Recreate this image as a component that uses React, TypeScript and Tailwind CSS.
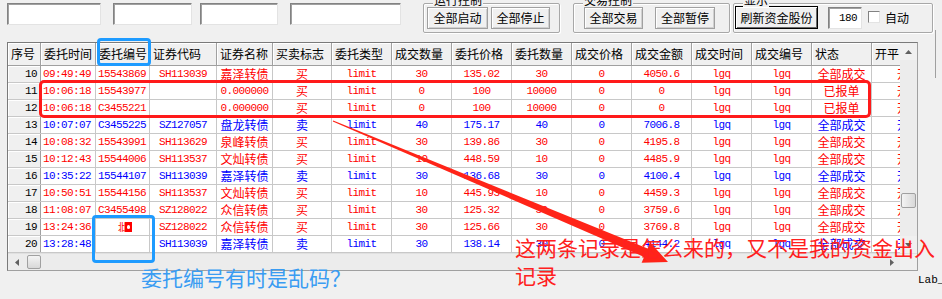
import type { ReactNode } from "react";

const cjk = "font-['Noto_Sans_CJK_SC',sans-serif]";
const mono = "font-['Liberation_Mono','Noto_Sans_CJK_SC',monospace] text-[11px] tracking-[-0.6px]";

type Order = {
  n: number;
  side: "买" | "卖";
  time: string;
  id: ReactNode;
  code: string;
  name: string;
  qty: string;
  price: string;
  oqty: string;
  amt: string;
  status: string;
};

const garbled = (
  <span className="ml-[20px] flex items-center">
    <span className={`${cjk} text-[10px] leading-none`}>邶</span>
    <span className="ml-[-2px] flex h-[10px] w-[7px] items-center justify-center bg-[#ff0000]">
      <span className="h-[4px] w-[3px] rounded-full bg-white" />
    </span>
  </span>
);

const orders: Order[] = [
  { n: 10, side: "买", time: "09:49:49", id: "15543869", code: "SH113039", name: "嘉泽转债", qty: "30", price: "135.02", oqty: "30", amt: "4050.6", status: "全部成交" },
  { n: 11, side: "买", time: "10:06:18", id: "15543977", code: "", name: "0.000000", qty: "0", price: "100", oqty: "10000", amt: "0", status: "已报单" },
  { n: 12, side: "买", time: "10:06:18", id: "C3455221", code: "", name: "0.000000", qty: "0", price: "100", oqty: "10000", amt: "0", status: "已报单" },
  { n: 13, side: "卖", time: "10:07:07", id: "C3455225", code: "SZ127057", name: "盘龙转债", qty: "40", price: "175.17", oqty: "40", amt: "7006.8", status: "全部成交" },
  { n: 14, side: "买", time: "10:08:32", id: "15543991", code: "SH113629", name: "泉峰转债", qty: "30", price: "139.86", oqty: "30", amt: "4195.8", status: "全部成交" },
  { n: 15, side: "买", time: "10:12:43", id: "15544006", code: "SH113537", name: "文灿转债", qty: "10", price: "448.59", oqty: "10", amt: "4485.9", status: "全部成交" },
  { n: 16, side: "卖", time: "10:35:22", id: "15544107", code: "SH113039", name: "嘉泽转债", qty: "30", price: "136.68", oqty: "30", amt: "4100.4", status: "全部成交" },
  { n: 17, side: "买", time: "10:50:51", id: "15544156", code: "SH113537", name: "文灿转债", qty: "10", price: "445.93", oqty: "10", amt: "4459.3", status: "全部成交" },
  { n: 18, side: "买", time: "11:08:07", id: "C3455498", code: "SZ128022", name: "众信转债", qty: "30", price: "125.32", oqty: "30", amt: "3759.6", status: "全部成交" },
  { n: 19, side: "买", time: "13:24:36", id: garbled, code: "SZ128022", name: "众信转债", qty: "30", price: "125.66", oqty: "30", amt: "3769.8", status: "全部成交" },
  { n: 20, side: "卖", time: "13:28:48", id: "", code: "SH113039", name: "嘉泽转债", qty: "30", price: "138.14", oqty: "30", amt: "4144.2", status: "全部成交" },
];

const columns = [
  { label: "序号", w: "w-[33px]", align: "justify-end pr-[3px]" },
  { label: "委托时间", w: "w-[55px]", align: "justify-start pl-[2px]" },
  { label: "委托编号", w: "w-[54px]", align: "justify-start pl-[2px]" },
  { label: "证券代码", w: "w-[67px]", align: "justify-center" },
  { label: "证券名称", w: "w-[56px]", align: "justify-center" },
  { label: "买卖标志", w: "w-[59px]", align: "justify-center" },
  { label: "委托类型", w: "w-[60px]", align: "justify-center" },
  { label: "成交数量", w: "w-[60px]", align: "justify-center" },
  { label: "委托价格", w: "w-[60px]", align: "justify-center" },
  { label: "委托数量", w: "w-[60px]", align: "justify-center" },
  { label: "成交价格", w: "w-[60px]", align: "justify-center" },
  { label: "成交金额", w: "w-[60px]", align: "justify-center" },
  { label: "成交时间", w: "w-[60px]", align: "justify-center" },
  { label: "成交编号", w: "w-[60px]", align: "justify-center" },
  { label: "状态", w: "w-[60px]", align: "justify-center" },
  { label: "开平", w: "w-[75px]", align: "justify-center" },
];

const hasCjk = (v: ReactNode) => typeof v === "string" && /[\u4e00-\u9fff]/.test(v);

function TextBox({ w, children }: { w: string; children?: ReactNode }) {
  return (
    <div className={`${w} h-[22px] shrink-0 border border-[#828282] border-b-[#e3e3e3] border-r-[#e3e3e3] bg-white shadow-[inset_1px_1px_0_#a0a0a0] flex items-center justify-end pr-[4px] ${mono} text-black`}>
      {children}
    </div>
  );
}

function Btn({ w, def, children }: { w: string; def?: boolean; children: ReactNode }) {
  return (
    <div
      className={`${w} shrink-0 flex items-center justify-center bg-[#f0f0f0] text-[12px] text-black ${cjk} ${
        def
          ? "h-[23px] border border-black shadow-[inset_1px_1px_0_#fff,inset_-1px_-1px_0_#696969]"
          : "h-[22px] border border-[#a0a0a0] shadow-[inset_1px_1px_0_#fff,inset_-1px_-1px_0_#d0d0d0]"
      }`}
    >
      {children}
    </div>
  );
}

function Group({ title, w, className, children }: { title: string; w: string; className: string; children: ReactNode }) {
  return (
    <div className={`relative ${w} h-[30px] shrink-0 rounded-[2px] border border-[#a8a8a8] shadow-[inset_1px_1px_0_#fff,1px_1px_0_#fff] flex ${className}`}>
      <span className={`absolute -top-[11px] left-[9px] bg-[#f0f0f0] px-[1px] text-[12px] leading-[14px] text-black ${cjk}`}>{title}</span>
      {children}
    </div>
  );
}

function Tri({ dir }: { dir: "up" | "down" | "left" | "right" }) {
  const pts = {
    up: "0,4 3.5,0 7,4",
    down: "0,0 3.5,4 7,0",
    left: "4,0 0,3.5 4,7",
    right: "0,0 4,3.5 0,7",
  }[dir];
  const vertical = dir === "up" || dir === "down";
  return (
    <svg width={vertical ? 7 : 4} height={vertical ? 4 : 7}>
      <polygon points={pts} fill="#606060" />
    </svg>
  );
}

function TopBar() {
  return (
    <div className="h-[42px] flex items-start pt-[3px] pl-[7px]">
      <TextBox w="w-[94px]" />
      <div className="ml-[12px]"><TextBox w="w-[79px]" /></div>
      <div className="ml-[8px]"><TextBox w="w-[78px]" /></div>
      <div className="ml-[12px]"><TextBox w="w-[111px]" /></div>
      <div className="ml-[22px]">
        <Group title="运行控制" w="w-[137px]" className="pl-[3px] pt-[3px] gap-[3px]">
          <Btn w="w-[61px]">全部启动</Btn>
          <Btn w="w-[59px]">全部停止</Btn>
        </Group>
      </div>
      <div className="ml-[13px]">
        <Group title="交易控制" w="w-[157px]" className="pl-[10px] pt-[3px] gap-[12px]">
          <Btn w="w-[59px]">全部交易</Btn>
          <Btn w="w-[60px]">全部暂停</Btn>
        </Group>
      </div>
      <div className="ml-[3px]">
        <Group title="显示" w="w-[200px]" className="pl-[1px] pt-[2px] items-start">
          <Btn w="w-[83px]" def>刷新资金股份</Btn>
          <div className="ml-[10px] mt-[1px]"><TextBox w="w-[34px]">180</TextBox></div>
          <div className="ml-[6px] mt-[5px] h-[12px] w-[12px] border border-[#828282] border-b-[#e3e3e3] border-r-[#e3e3e3] bg-white" />
          <span className={`ml-[5px] mt-[3px] text-[12px] text-black ${cjk}`}>自动</span>
        </Group>
      </div>
    </div>
  );
}

function Cell({ col, children, color }: { col: number; children: ReactNode; color: string }) {
  const c = columns[col];
  const font = col === 0 ? `${mono} text-black` : hasCjk(children) ? `${cjk} text-[12px] ${color}` : `${mono} ${color}`;
  return (
    <div
      className={`${c.w} shrink-0 h-full flex items-center whitespace-nowrap ${c.align} ${font} ${
        col === 0
          ? "bg-[#f0f0f0] border-r border-[#a0a0a0] shadow-[inset_1px_1px_0_#fff]"
          : "border-r border-[#c8c8c8] bg-white"
      }`}
    >
      {children}
    </div>
  );
}

function Grid() {
  return (
    <div className="ml-[7px] w-[911px] shrink-0 border border-[#a0a0a0] border-t-[#7a7a7a] border-l-[#7a7a7a] bg-white">
      <div className="flex">
        <div className="w-[892px] overflow-hidden">
          <div className="flex h-[23px] w-max border-b border-[#a0a0a0] bg-[#f0f0f0]">
            {columns.map((c) => (
              <div
                key={c.label}
                className={`${c.w} shrink-0 flex items-center pl-[3px] border-r border-[#a0a0a0] shadow-[inset_1px_1px_0_#fff] text-[12px] text-black ${cjk}`}
              >
                {c.label}
              </div>
            ))}
          </div>
          {orders.map((o) => {
            const color = o.side === "买" ? "text-[#ff0000]" : "text-[#0000ff]";
            const cells: ReactNode[] = [
              o.n, o.time, o.id, o.code, o.name, o.side, "limit", o.qty, o.price, o.oqty, "0", o.amt, "lgq", "lgq", o.status, "开仓",
            ];
            return (
              <div key={o.n} className="flex h-[17px] w-max border-b border-[#c8c8c8]">
                {cells.map((v, i) => (
                  <Cell key={i} col={i} color={color}>{v}</Cell>
                ))}
              </div>
            );
          })}
        </div>
        <div className="w-[17px] h-[210px] flex flex-col bg-[#ececec]">
          <div className="h-[17px] flex items-center justify-center bg-[#f0f0f0]"><Tri dir="up" /></div>
          <div className="flex-1 pt-[133px]">
            <div className="mx-[1px] h-[15px] rounded-[2px] border border-[#a0a0a0] bg-gradient-to-r from-[#f4f4f4] to-[#d8d8d8]" />
          </div>
          <div className="h-[17px] flex items-center justify-center bg-[#f0f0f0]"><Tri dir="down" /></div>
        </div>
      </div>
      <div className="flex h-[17px] border-t border-[#e0e0e0]">
        <div className="w-[892px] flex items-center bg-[#ececec]">
          <div className="w-[17px] h-full flex items-center justify-center"><Tri dir="left" /></div>
          <div className="ml-[2px] h-[14px] w-[14px] rounded-[2px] border border-[#a0a0a0] bg-gradient-to-b from-[#f4f4f4] to-[#d8d8d8]" />
          <div className="flex-1" />
          <div className="w-[17px] h-full flex items-center justify-center"><Tri dir="right" /></div>
        </div>
        <div className="w-[17px] bg-[#f0f0f0]" />
      </div>
    </div>
  );
}

export default function App() {
  return (
    <div className="relative w-[942px] h-[299px] overflow-hidden bg-[#f0f0f0]">
      <TopBar />
      <div className="flex items-start">
        <Grid />
        <div className="ml-[17px] -mt-[12px] h-[48px] w-px bg-[#a0a0a0]" />
      </div>
      <div className="pl-[918px] mt-[2px] whitespace-nowrap font-['Liberation_Mono',monospace] text-[11px] leading-[14px] text-black">Lab_</div>

      {/* annotations drawn over the screenshot */}
      <div className="pointer-events-none absolute left-[97px] top-[38px] h-[28px] w-[54px] rounded-[4px] border-[3px] border-[#1e9bff]" />
      <div className="pointer-events-none absolute left-[39px] top-[80px] h-[38px] w-[832px] rounded-[5px] border-[3px] border-[#ff1a1a]" />
      <div className="pointer-events-none absolute left-[92px] top-[215px] h-[48px] w-[63px] rounded-[4px] border-[3px] border-[#1e9bff]" />
      <svg className="pointer-events-none absolute left-0 top-0" width="942" height="299">
        <polygon
          points="333.2,120.5 647.6,248.6 650.2,242.6 668,262 641.6,262.8 644.1,256.9 332.8,121.5"
          fill="#ff2418"
        />
      </svg>
      <div className={`pointer-events-none absolute left-[141px] top-[264px] whitespace-nowrap text-[21px] leading-[26px] text-[#3a9cf2] ${cjk}`}>
        委托编号有时是乱码？
      </div>
      <div className={`pointer-events-none absolute left-[515px] top-[233px] whitespace-nowrap text-[21px] leading-[28px] text-[#ff2020] ${cjk}`}>
        这两条记录是怎么来的，又不是我的资金出入
        <br />
        记录
      </div>
    </div>
  );
}
